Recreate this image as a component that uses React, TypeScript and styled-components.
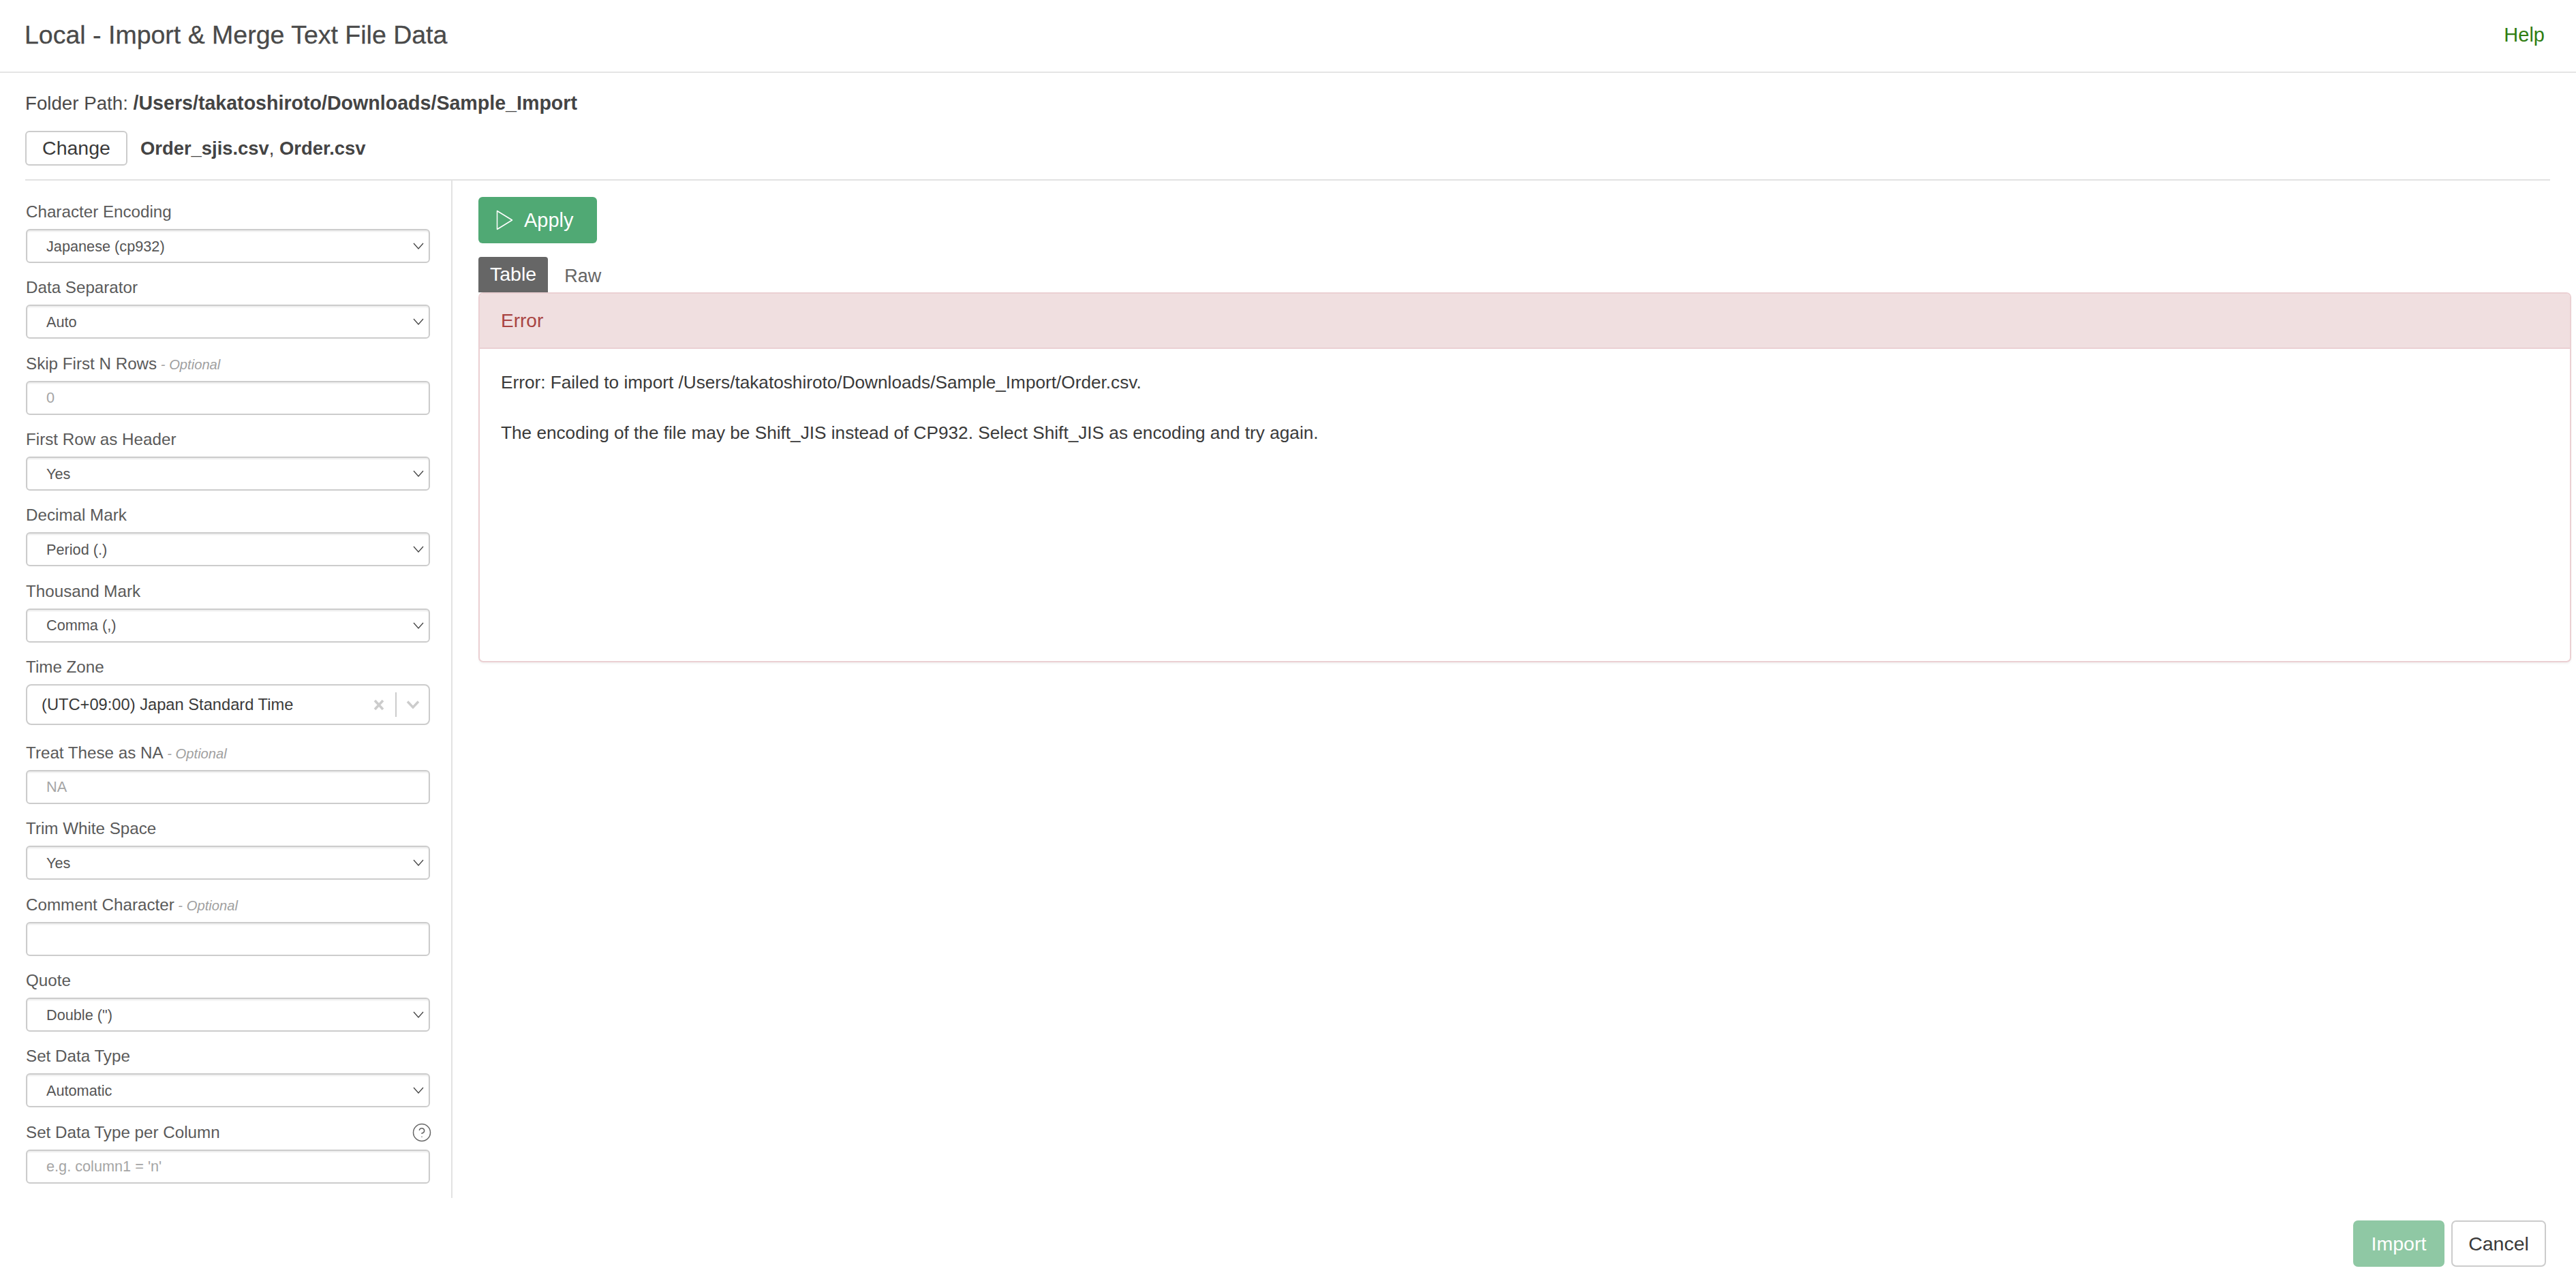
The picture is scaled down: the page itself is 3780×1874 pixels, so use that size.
import { FC } from 'react'
import styled, { createGlobalStyle } from 'styled-components'
import { CircleHelp } from 'lucide-react'

const GlobalStyle = createGlobalStyle`
  html, body {
    margin: 0;
    padding: 0;
    background: #fff;
  }
  * {
    box-sizing: border-box;
  }
  body {
    font-family: "Liberation Sans", Arial, sans-serif;
    color: #333;
  }
`

interface FieldProps {
  label: string
  optional?: boolean
  help?: boolean
  value?: string
  placeholder?: string
  kind: 'select' | 'input' | 'creatable'
}

const fields: FieldProps[] = [
  { label: 'Character Encoding', kind: 'select', value: 'Japanese (cp932)' },
  { label: 'Data Separator', kind: 'select', value: 'Auto' },
  { label: 'Skip First N Rows', optional: true, kind: 'input', placeholder: '0' },
  { label: 'First Row as Header', kind: 'select', value: 'Yes' },
  { label: 'Decimal Mark', kind: 'select', value: 'Period (.)' },
  { label: 'Thousand Mark', kind: 'select', value: 'Comma (,)' },
  { label: 'Time Zone', kind: 'creatable', value: '(UTC+09:00) Japan Standard Time' },
  { label: 'Treat These as NA', optional: true, kind: 'input', placeholder: 'NA' },
  { label: 'Trim White Space', kind: 'select', value: 'Yes' },
  { label: 'Comment Character', optional: true, kind: 'input' },
  { label: 'Quote', kind: 'select', value: 'Double (")' },
  { label: 'Set Data Type', kind: 'select', value: 'Automatic' },
  { label: 'Set Data Type per Column', help: true, kind: 'input', placeholder: "e.g. column1 = 'n'" },
]

const Field: FC<FieldProps> = ({ label, optional, help, value, placeholder, kind }) => (
  <FieldBlock $tall={kind === 'creatable'}>
    <LabelRow>
      <span>
        {label}
        {optional && <Optional> - Optional</Optional>}
      </span>
      {help && <HelpIcon size={30} strokeWidth={1.2} color="#666" />}
    </LabelRow>
    {kind === 'select' && (
      <SelectWrap>
        <Select defaultValue={value}>
          <option>{value}</option>
        </Select>
        <Chevron viewBox="0 0 16 10">
          <path d="M1 1l7 8 7-8" fill="none" stroke="#444" strokeWidth="1.3" />
        </Chevron>
      </SelectWrap>
    )}
    {kind === 'input' && <Input placeholder={placeholder} readOnly />}
    {kind === 'creatable' && (
      <TimeZone>
        <TimeZoneValue>{value}</TimeZoneValue>
        <svg width="16" height="17" viewBox="0 0 16 17">
          <path d="M2 2l12 13M14 2L2 15" fill="none" stroke="#ccc" strokeWidth="3.6" />
        </svg>
        <TimeZoneSep />
        <svg width="20" height="14" viewBox="0 0 20 14">
          <path d="M2 2.5l8 8.5 8-8.5" fill="none" stroke="#ccc" strokeWidth="3.4" />
        </svg>
      </TimeZone>
    )}
  </FieldBlock>
)

export default function App() {
  return (
    <Page>
      <GlobalStyle />
      <Header>
        <Title>Local - Import &amp; Merge Text File Data</Title>
        <HelpLink>Help</HelpLink>
      </Header>
      <FolderBlock>
        <FolderPath>
          Folder Path: <strong>/Users/takatoshiroto/Downloads/Sample_Import</strong>
        </FolderPath>
        <FileRow>
          <ChangeButton>Change</ChangeButton>
          <FileNames>
            <strong>Order_sjis.csv</strong>, <strong>Order.csv</strong>
          </FileNames>
        </FileRow>
      </FolderBlock>
      <Body>
        <Sidebar>
          {fields.map((f) => (
            <Field key={f.label} {...f} />
          ))}
        </Sidebar>
        <Main>
          <ApplyButton>
            <svg width="25" height="30" viewBox="0 0 25 30">
              <path d="M1.5 1.5v27L23.5 15z" fill="none" stroke="#fff" strokeWidth="1.5" strokeLinejoin="round" />
            </svg>
            Apply
          </ApplyButton>
          <Tabs>
            <Tab $active>Table</Tab>
            <Tab>Raw</Tab>
          </Tabs>
          <ErrorPanel>
            <ErrorHeading>Error</ErrorHeading>
            <ErrorBody>
              <p>Error: Failed to import /Users/takatoshiroto/Downloads/Sample_Import/Order.csv.</p>
              <p>The encoding of the file may be Shift_JIS instead of CP932. Select Shift_JIS as encoding and try again.</p>
            </ErrorBody>
          </ErrorPanel>
        </Main>
      </Body>
      <Footer>
        <ImportButton>Import</ImportButton>
        <CancelButton>Cancel</CancelButton>
      </Footer>
    </Page>
  )
}

const Page = styled.div`
  width: 3780px;
  height: 1874px;
  display: flex;
  flex-direction: column;
  overflow: hidden;
`

const Header = styled.header`
  height: 107px;
  flex-shrink: 0;
  display: flex;
  align-items: center;
  justify-content: space-between;
  padding: 0 46px 2px 36px;
  border-bottom: 2px solid #e5e5e5;
`

const Title = styled.h1`
  margin: 0;
  font-size: 37.5px;
  font-weight: 400;
  color: #4a4a4a;
  -webkit-text-stroke: 0.3px #4a4a4a;
`

const HelpLink = styled.a`
  font-size: 29px;
  color: #2f7d12;
`

const FolderBlock = styled.div`
  flex-shrink: 0;
  margin: 0 38px 0 37px;
  height: 158px;
  padding-top: 26px;
  border-bottom: 2px solid #e2e2e2;
`

const FolderPath = styled.div`
  height: 36px;
  line-height: 36px;
  font-size: 27.7px;
  color: #4a4a4a;

  strong {
    font-size: 28.6px;
    color: #444;
  }
`

const FileRow = styled.div`
  margin-top: 23px;
  display: flex;
  align-items: center;
  gap: 19px;
`

const FileNames = styled.div`
  font-size: 27.4px;
  color: #444;
`

const OutlineButton = styled.button`
  height: 51px;
  padding: 0;
  font-family: inherit;
  font-size: 28.5px;
  color: #3a3a3a;
  background: #fff;
  border: 2px solid #ccc;
  border-radius: 6px;
`

const ChangeButton = styled(OutlineButton)`
  width: 150px;
`

const Body = styled.div`
  height: 1493px;
  flex-shrink: 0;
  display: flex;
`

const Sidebar = styled.aside`
  width: 664px;
  flex-shrink: 0;
  padding: 31px 31px 0 38px;
  border-right: 2px solid #e2e2e2;
`

const FieldBlock = styled.div<{ $tall?: boolean }>`
  margin-bottom: ${(props) => (props.$tall ? 26 : 21.35)}px;
`

const LabelRow = styled.label`
  height: 30px;
  margin-bottom: 10px;
  display: flex;
  align-items: center;
  justify-content: space-between;
  font-size: 24.2px;
  color: #5a5a5a;
`

const HelpIcon = styled(CircleHelp)`
  margin-right: -3px;
`

const Optional = styled.em`
  font-size: 20.2px;
  color: #a0a0a0;
`

const controlStyle = `
  display: block;
  width: 100%;
  height: 50px;
  padding: 0 28px;
  font-family: inherit;
  font-size: 21.7px;
  color: #555;
  background: #fff;
  border: 2px solid #ccc;
  border-radius: 6px;
  box-shadow: inset 0 2px 2px rgba(0, 0, 0, 0.075);
  outline: none;
`

const SelectWrap = styled.div`
  position: relative;
`

const Select = styled.select`
  ${controlStyle}
  appearance: none;
`

const Chevron = styled.svg`
  position: absolute;
  top: 20px;
  right: 9px;
  width: 16px;
  height: 10px;
`

const Input = styled.input`
  ${controlStyle}

  &::placeholder {
    color: #a5a5a5;
    opacity: 1;
  }
`

const TimeZone = styled.div`
  height: 60px;
  display: flex;
  align-items: center;
  padding: 0 13px 0 21px;
  background: #fff;
  border: 2px solid #ccc;
  border-radius: 8px;
`

const TimeZoneValue = styled.span`
  flex: 1;
  font-size: 23.7px;
  color: #3a3a3a;
`

const TimeZoneSep = styled.span`
  width: 2px;
  height: 36px;
  margin: 0 14px 0 16px;
  background: #ccc;
`

const Main = styled.main`
  flex: 1;
  min-width: 0;
  padding: 24px 7px 0 38px;
`

const ApplyButton = styled.button`
  width: 174px;
  height: 68px;
  display: flex;
  align-items: center;
  gap: 16px;
  padding: 0 0 0 26px;
  font-family: inherit;
  font-size: 29px;
  color: #fff;
  background: #50a974;
  border: none;
  border-radius: 6px;
`

const Tabs = styled.div`
  display: flex;
  margin-top: 20px;
  height: 52px;
`

const Tab = styled.div<{ $active?: boolean }>`
  display: flex;
  align-items: center;
  padding: ${(props) => (props.$active ? '0 17px 1px' : '5px 0 0 24px')};
  font-size: ${(props) => (props.$active ? 28.5 : 27)}px;
  color: ${(props) => (props.$active ? '#fff' : '#666')};
  background: ${(props) => (props.$active ? '#666' : 'transparent')};
  border-radius: 4px 4px 0 0;
`

const ErrorPanel = styled.section`
  height: 543px;
  border: 2px solid #ebd0d3;
  border-radius: 7px;
  box-shadow: 0 2px 3px rgba(0, 0, 0, 0.05);
  overflow: hidden;
`

const ErrorHeading = styled.div`
  height: 81px;
  display: flex;
  align-items: center;
  padding: 1px 0 0 31px;
  font-size: 28px;
  color: #a94442;
  background: #f0dfe0;
  border-bottom: 2px solid #ebd0d3;
`

const ErrorBody = styled.div`
  padding: 34px 31px;
  font-size: 26.2px;
  color: #3a3a3a;

  p {
    margin: 0 0 44px;
    line-height: 30px;
  }
`

const Footer = styled.footer`
  flex: 1;
  display: flex;
  justify-content: flex-end;
  align-items: flex-start;
  gap: 10px;
  padding: 33px 44px 0 0;
`

const ImportButton = styled.button`
  width: 134px;
  height: 68px;
  padding: 0;
  font-family: inherit;
  font-size: 28.5px;
  color: #fff;
  background: #8fc8a4;
  border: none;
  border-radius: 7px;
`

const CancelButton = styled(OutlineButton)`
  width: 139px;
  height: 68px;
  border-radius: 7px;
`
